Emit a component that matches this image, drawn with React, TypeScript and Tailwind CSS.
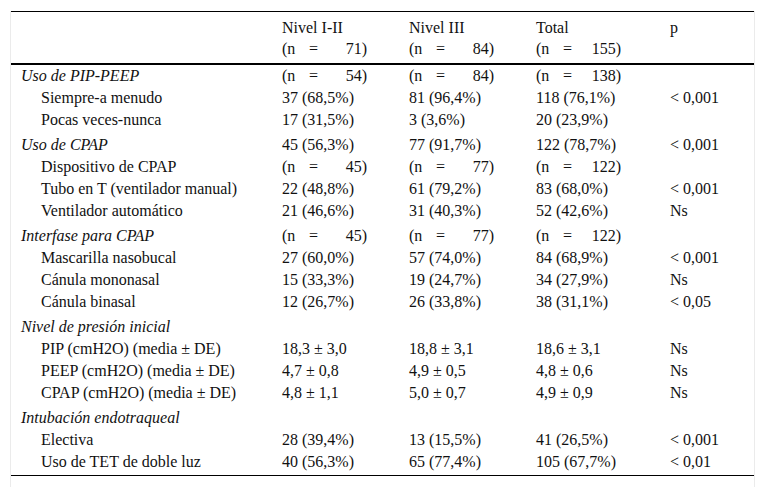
type Cell = string | { n: string };

type Row = {
  label: string;
  group?: boolean;
  cells: Cell[];
  p?: string;
  tall?: boolean;
};

const rows: Row[] = [
  { label: "Uso de PIP-PEEP", group: true, cells: [{ n: "54" }, { n: "84" }, { n: "138" }] },
  { label: "Siempre-a menudo", cells: ["37 (68,5%)", "81 (96,4%)", "118 (76,1%)"], p: "< 0,001" },
  { label: "Pocas veces-nunca", cells: ["17 (31,5%)", "3 (3,6%)", "20 (23,9%)"] },
  { label: "Uso de CPAP", group: true, tall: true, cells: ["45 (56,3%)", "77 (91,7%)", "122 (78,7%)"], p: "< 0,001" },
  { label: "Dispositivo de CPAP", cells: [{ n: "45" }, { n: "77" }, { n: "122" }] },
  { label: "Tubo en T (ventilador manual)", cells: ["22 (48,8%)", "61 (79,2%)", "83 (68,0%)"], p: "< 0,001" },
  { label: "Ventilador automático", cells: ["21 (46,6%)", "31 (40,3%)", "52 (42,6%)"], p: "Ns" },
  { label: "Interfase para CPAP", group: true, tall: true, cells: [{ n: "45" }, { n: "77" }, { n: "122" }] },
  { label: "Mascarilla nasobucal", cells: ["27 (60,0%)", "57 (74,0%)", "84 (68,9%)"], p: "< 0,001" },
  { label: "Cánula mononasal", cells: ["15 (33,3%)", "19 (24,7%)", "34 (27,9%)"], p: "Ns" },
  { label: "Cánula binasal", cells: ["12 (26,7%)", "26 (33,8%)", "38 (31,1%)"], p: "< 0,05" },
  { label: "Nivel de presión inicial", group: true, tall: true, cells: ["", "", ""] },
  { label: "PIP (cmH2O) (media ± DE)", cells: ["18,3 ± 3,0", "18,8 ± 3,1", "18,6 ± 3,1"], p: "Ns" },
  { label: "PEEP (cmH2O) (media ± DE)", cells: ["4,7 ± 0,8", "4,9 ± 0,5", "4,8 ± 0,6"], p: "Ns" },
  { label: "CPAP (cmH2O) (media ± DE)", cells: ["4,8 ± 1,1", "5,0 ± 0,7", "4,9 ± 0,9"], p: "Ns" },
  { label: "Intubación endotraqueal", group: true, tall: true, cells: ["", "", ""] },
  { label: "Electiva", cells: ["28 (39,4%)", "13 (15,5%)", "41 (26,5%)"], p: "< 0,001" },
  { label: "Uso de TET de doble luz", cells: ["40 (56,3%)", "65 (77,4%)", "105 (67,7%)"], p: "< 0,01" },
];

// "(n = 71)" is set with wide gaps, the number flush right
const NCount = ({ v }: { v: string }) => (
  <span className="inline-flex w-[85px]">
    <span className="w-[27px]">(n</span>
    <span>=</span>
    <span className="ml-auto">{v})</span>
  </span>
);

const renderCell = (c: Cell) => (typeof c === "string" ? c : <NCount v={c.n} />);

const cols = "grid grid-cols-[271px_127px_127px_134px_1fr]";

export default function App() {
  return (
    <div className="h-[487px] w-full overflow-hidden bg-white pl-[10px] pt-[10px] font-[Liberation_Serif,Times_New_Roman,serif] text-[16px] text-[#111]">
      <div className="h-[477px] w-[745px] border-x border-[#ebebeb]">
        <div className="mt-px border-t border-black">
          <div className={`${cols} pb-[4px] pt-[5px] leading-[21px]`}>
            <div />
            {[
              ["Nivel I-II", "71"],
              ["Nivel III", "84"],
              ["Total", "155"],
            ].map(([t, n]) => (
              <div key={t}>
                <div>{t}</div>
                <div>
                  <NCount v={n} />
                </div>
              </div>
            ))}
            <div>p</div>
          </div>
        </div>
        <div className="border-t-2 border-black">
          {rows.map((r) => (
            <div
              key={r.label}
              className={`${cols} items-center whitespace-nowrap leading-[22px] ${r.tall ? "h-[25px] pt-[2px]" : "h-[22px]"}`}
            >
              <div className={r.group ? "pl-[10px] italic" : "pl-[30px]"}>{r.label}</div>
              {r.cells.map((c, i) => (
                <div key={i}>{renderCell(c)}</div>
              ))}
              <div>{r.p}</div>
            </div>
          ))}
          <div className="mt-[2px] h-px bg-black" />
        </div>
      </div>
    </div>
  );
}
